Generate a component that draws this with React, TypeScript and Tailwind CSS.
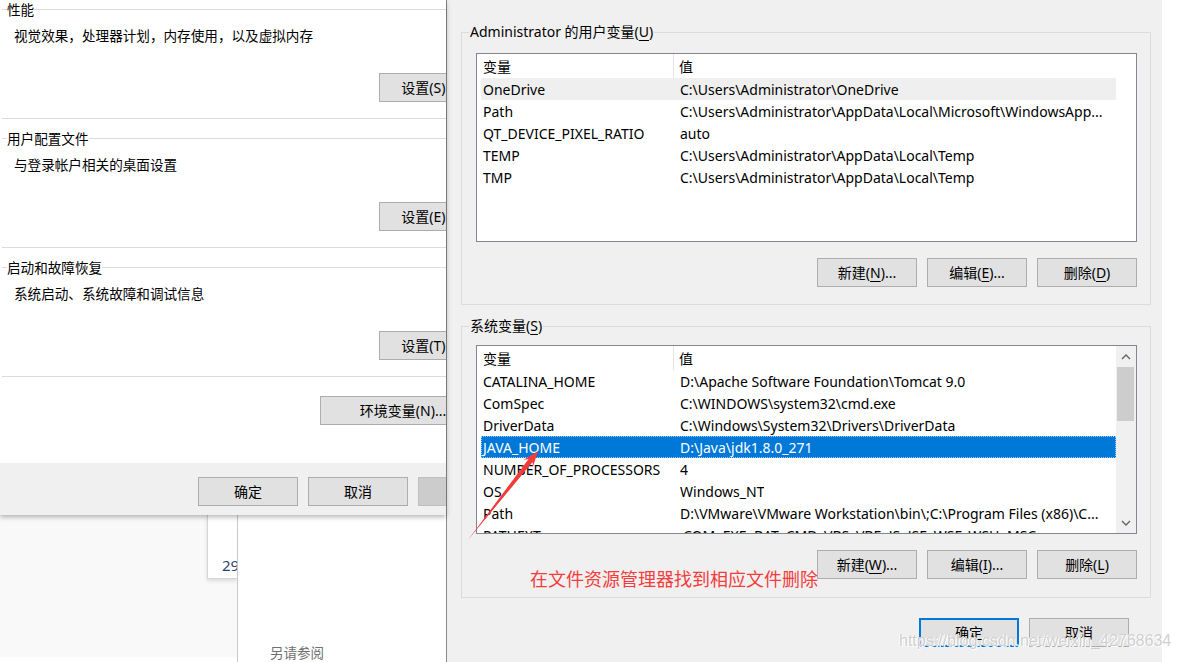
import React from "react";

type EnvVar = { name: string; value: string };

const userVars: EnvVar[] = [
  { name: "OneDrive", value: "C:\\Users\\Administrator\\OneDrive" },
  { name: "Path", value: "C:\\Users\\Administrator\\AppData\\Local\\Microsoft\\WindowsApp..." },
  { name: "QT_DEVICE_PIXEL_RATIO", value: "auto" },
  { name: "TEMP", value: "C:\\Users\\Administrator\\AppData\\Local\\Temp" },
  { name: "TMP", value: "C:\\Users\\Administrator\\AppData\\Local\\Temp" },
];

const systemVars: EnvVar[] = [
  { name: "CATALINA_HOME", value: "D:\\Apache Software Foundation\\Tomcat 9.0" },
  { name: "ComSpec", value: "C:\\WINDOWS\\system32\\cmd.exe" },
  { name: "DriverData", value: "C:\\Windows\\System32\\Drivers\\DriverData" },
  { name: "JAVA_HOME", value: "D:\\Java\\jdk1.8.0_271" },
  { name: "NUMBER_OF_PROCESSORS", value: "4" },
  { name: "OS", value: "Windows_NT" },
  { name: "Path", value: "D:\\VMware\\VMware Workstation\\bin\\;C:\\Program Files (x86)\\C..." },
  { name: "PATHEXT", value: ".COM;.EXE;.BAT;.CMD;.VBS;.VBE;.JS;.JSE;.WSF;.WSH;.MSC" },
];

// access key letter, underlined like Win32 labels
function Key({ k }: { k: string }) {
  return <span className="underline underline-offset-[3px]">{k}</span>;
}

function WinButton({
  children,
  width = "w-[100px]",
  focused = false,
  disabled = false,
}: {
  children: React.ReactNode;
  width?: string;
  focused?: boolean;
  disabled?: boolean;
}) {
  let look = "border-[#adadad] bg-[#e1e1e1] text-black";
  if (focused) look = "border-[#0078d7] bg-[#e1e1e1] text-black shadow-[inset_0_0_0_1px_#0078d7]";
  if (disabled) look = "border-[#bfbfbf] bg-[#cccccc] text-[#838383]";
  return (
    <button
      className={`flex h-[29px] shrink-0 items-center justify-center whitespace-nowrap border text-[14px] leading-none ${width} ${look}`}
    >
      {children}
    </button>
  );
}

/* ---------------- System properties (left, behind) ---------------- */

function GroupHeader({ title }: { title: string }) {
  return (
    <div className="flex h-[19px] items-center">
      <div className="ml-[2px] h-px w-[5px] bg-[#dcdcdc]" />
      <span className="text-[13.6px] leading-[19px] text-black">{title}</span>
      <div className="h-px flex-1 bg-[#dcdcdc]" />
    </div>
  );
}

function PerfGroup({ title, desc, button }: { title: string; desc: string; button: string }) {
  return (
    <div className="flex flex-col pb-[10px]">
      <GroupHeader title={title} />
      <div className="mt-[7px] pl-[14px] text-[13.6px] leading-[20px] text-black">{desc}</div>
      <div className="mt-[27px] flex pl-[379px]">
        <WinButton>{button}</WinButton>
      </div>
      <div className="ml-[2px] mt-[16px] h-px bg-[#dcdcdc]" />
    </div>
  );
}

function SystemProperties() {
  return (
    <div className="relative z-10 h-[515px] w-[446px] overflow-hidden bg-white shadow-[0_2px_5px_rgba(0,0,0,0.3)]">
      <div className="flex h-full w-[540px] flex-col">
        <PerfGroup title="性能" desc="视觉效果，处理器计划，内存使用，以及虚拟内存" button="设置(S)..." />
        <PerfGroup title="用户配置文件" desc="与登录帐户相关的桌面设置" button="设置(E)..." />
        <PerfGroup title="启动和故障恢复" desc="系统启动、系统故障和调试信息" button="设置(T)..." />
        <div className="-mt-[10px] flex pl-[320px] pt-[19px]">
          <WinButton width="w-[166px]">环境变量(N)...</WinButton>
        </div>
        <div className="mt-auto flex h-[52px] gap-[10px] bg-[#f0f0f0] pl-[198px] pt-[14px]">
          <WinButton>确定</WinButton>
          <WinButton>取消</WinButton>
          <WinButton disabled>应用(A)</WinButton>
        </div>
      </div>
    </div>
  );
}

function BehindWindows() {
  return (
    <div className="flex h-[147px] w-[446px]">
      <div className="flex w-[207px] flex-col">
        <div className="h-[142px] bg-[#f9f9f9]" />
      </div>
      <div className="flex w-[30px] flex-col bg-[#f9f9f9]">
        <div className="h-[64px] border-b border-l border-[#d6d6d6] bg-white pl-[14px] pt-[41px] text-[15px] leading-[18px] text-[#2a4670] shadow-[0_2px_4px_rgba(0,0,0,0.12)]">
          29
        </div>
        <div className="mt-auto h-[5px] bg-white" />
      </div>
      <div className="flex w-[209px] flex-col border-l border-[#c9c9c9] bg-white pl-[32px] pt-[128px]">
        <span className="text-[13.5px] leading-[20px] text-[#707070]">另请参阅</span>
      </div>
    </div>
  );
}

/* ---------------- Environment variables dialog ---------------- */

function Chevron({ up }: { up: boolean }) {
  return (
    <svg width="10" height="6" viewBox="0 0 10 6" className="text-[#606060]">
      <polyline
        points={up ? "1,5 5,1 9,5" : "1,1 5,5 9,1"}
        fill="none"
        stroke="currentColor"
        strokeWidth="1.3"
      />
    </svg>
  );
}

function ScrollBar() {
  return (
    <div className="flex w-[20px] flex-col bg-[#f0f0f0]">
      <div className="flex h-[21px] items-center justify-center">
        <Chevron up />
      </div>
      <div className="ml-[1px] h-[54px] w-[17px] bg-[#cdcdcd]" />
      <div className="flex-1" />
      <div className="flex h-[21px] items-center justify-center">
        <Chevron up={false} />
      </div>
    </div>
  );
}

function VarList({
  rows,
  selected = -1,
  inactive = -1,
  scroll = false,
}: {
  rows: EnvVar[];
  selected?: number;
  inactive?: number;
  scroll?: boolean;
}) {
  return (
    <div className="flex h-[189px] w-[661px] border border-[#828790] bg-white text-[14px] text-black">
      <div className="w-[639px] shrink-0 overflow-hidden pl-[4px]">
        <div className="flex h-[24px] w-[635px] items-center">
          <div className="flex h-full w-[193px] items-center border-r border-[#e5e5e5] pl-[2px]">变量</div>
          <div className="pl-[5px]">值</div>
        </div>
        {rows.map((r, i) => {
          let look = "";
          if (i === selected)
            look = "bg-[#0078d7] text-white outline outline-1 outline-dotted -outline-offset-1 outline-[#9cc9f2]";
          else if (i === inactive) look = "bg-[#efefef]";
          return (
            <div key={r.name + i} className={`flex h-[22px] w-[635px] items-center whitespace-nowrap ${look}`}>
              <div className="w-[194px] shrink-0 pl-[2px]">{r.name}</div>
              <div className="overflow-hidden pl-[5px]">{r.value}</div>
            </div>
          );
        })}
      </div>
      {scroll && <ScrollBar />}
    </div>
  );
}

function VarGroup({
  legend,
  children,
  buttons,
  className = "",
}: {
  legend: React.ReactNode;
  children: React.ReactNode;
  buttons: React.ReactNode;
  className?: string;
}) {
  return (
    <fieldset className={`w-[690px] border border-[#dcdcdc] pl-[14px] pr-[13px] ${className}`}>
      <legend className="-ml-[7px] px-[1px] text-[14px] leading-[20px] text-black">{legend}</legend>
      {children}
      <div className="mt-[16px] flex justify-end gap-[10px]">{buttons}</div>
    </fieldset>
  );
}

function EnvDialog() {
  return (
    <div className="flex h-[662px] w-[716px] shrink-0 flex-col border-l border-[#8a8a8a] bg-[#f0f0f0] pl-[14px] pr-[11px] pt-[22px]">
      <VarGroup
        className="pb-[17px]"
        legend={
          <>
            Administrator 的用户变量(<Key k="U" />)
          </>
        }
        buttons={
          <>
            <WinButton>
              新建(<Key k="N" />)...
            </WinButton>
            <WinButton>
              编辑(<Key k="E" />)...
            </WinButton>
            <WinButton>
              删除(<Key k="D" />)
            </WinButton>
          </>
        }
      >
        <div className="mt-[11px]">
          <VarList rows={userVars} inactive={0} />
        </div>
      </VarGroup>

      <VarGroup
        className="mt-[11px] pb-[18px]"
        legend={
          <>
            系统变量(<Key k="S" />)
          </>
        }
        buttons={
          <>
            <WinButton>
              新建(<Key k="W" />)...
            </WinButton>
            <WinButton>
              编辑(<Key k="I" />)...
            </WinButton>
            <WinButton>
              删除(<Key k="L" />)
            </WinButton>
          </>
        }
      >
        <div className="mt-[9px]">
          <VarList rows={systemVars} selected={3} scroll />
        </div>
      </VarGroup>

      <div className="mt-[20px] flex justify-end gap-[10px] pr-[22px]">
        <WinButton focused>确定</WinButton>
        <WinButton>取消</WinButton>
      </div>
    </div>
  );
}

export default function App() {
  return (
    <div className="relative flex h-[662px] w-[1180px] overflow-hidden bg-white font-['Noto_Sans','Noto_Sans_CJK_SC',sans-serif]">
      <div className="flex w-[446px] shrink-0 flex-col">
        <SystemProperties />
        <BehindWindows />
      </div>
      <EnvDialog />
      <div className="flex-1 bg-white" />

      {/* red note arrow pointing at JAVA_HOME */}
      <svg className="absolute left-[460px] top-[445px]" width="85" height="100" viewBox="0 0 85 100">
        <polygon
          points="8,95 72.6,16.9 72.8,22.3 78,6 63.4,14.9 68.6,13.9"
          fill="#f23b3b"
        />
      </svg>
      <div className="absolute left-[530px] top-[566px] font-['Noto_Sans_CJK_SC',sans-serif] text-[18px] leading-[24px] text-[#f43c3c]">
        在文件资源管理器找到相应文件删除
      </div>

      {/* blog watermark */}
      <div className="absolute left-[899px] top-[631px] font-['Liberation_Sans',sans-serif] text-[16px] leading-[20px] text-[#cfcfcf] [text-shadow:1px_1px_0_#ffffff,-1px_0_0_#ffffff]">
        https://blog.csdn.net/weixin_42768634
      </div>
    </div>
  );
}
